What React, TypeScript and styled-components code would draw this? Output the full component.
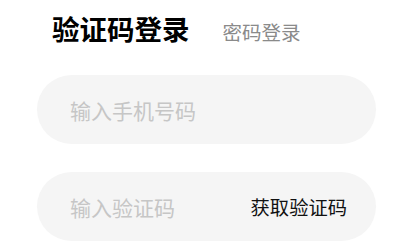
import React from "react";
import styled, { createGlobalStyle } from "styled-components";

const Global = createGlobalStyle`
  html, body { margin: 0; padding: 0; background: #fff; }
  body { font-family: "Noto Sans CJK SC", "Noto Sans", sans-serif; }
  * { box-sizing: border-box; }
`;

const Page = styled.div`
  padding: 12px 36px 0 37px;
  width: 412px;
`;

const Tabs = styled.div`
  display: flex;
  align-items: baseline;
  gap: 33px;
  padding-left: 15px;
  height: 47px;
`;

const Tab = styled.span<{ $active?: boolean }>`
  font-size: ${(p) => (p.$active ? "27.5px" : "19.5px")};
  font-weight: ${(p) => (p.$active ? 700 : 400)};
  color: ${(p) => (p.$active ? "#000" : "#8a8a8a")};
  line-height: 1.2;
`;

const Form = styled.div`
  margin-top: 16px;
  display: flex;
  flex-direction: column;
  gap: 28px;
  width: 339px;
`;

const Field = styled.div`
  height: 69px;
  border-radius: 35px;
  background: #f5f5f5;
  display: flex;
  align-items: center;
  padding: 0 29px 0 33px;
`;

const Input = styled.input`
  flex: 1;
  min-width: 0;
  border: none;
  outline: none;
  background: transparent;
  font-family: inherit;
  font-size: 21px;
  color: #222;
  padding: 0;
  &::placeholder { color: #c6c6c6; }
`;

const CodeButton = styled.button`
  border: none;
  background: transparent;
  padding: 0;
  font-family: inherit;
  font-size: 19.3px;
  color: #111;
  cursor: pointer;
`;

export default function App() {
  return (
    <>
      <Global />
      <Page>
        <Tabs>
          <Tab $active>验证码登录</Tab>
          <Tab>密码登录</Tab>
        </Tabs>
        <Form>
          <Field>
            <Input placeholder="输入手机号码" />
          </Field>
          <Field>
            <Input placeholder="输入验证码" />
            <CodeButton>获取验证码</CodeButton>
          </Field>
        </Form>
      </Page>
    </>
  );
}
